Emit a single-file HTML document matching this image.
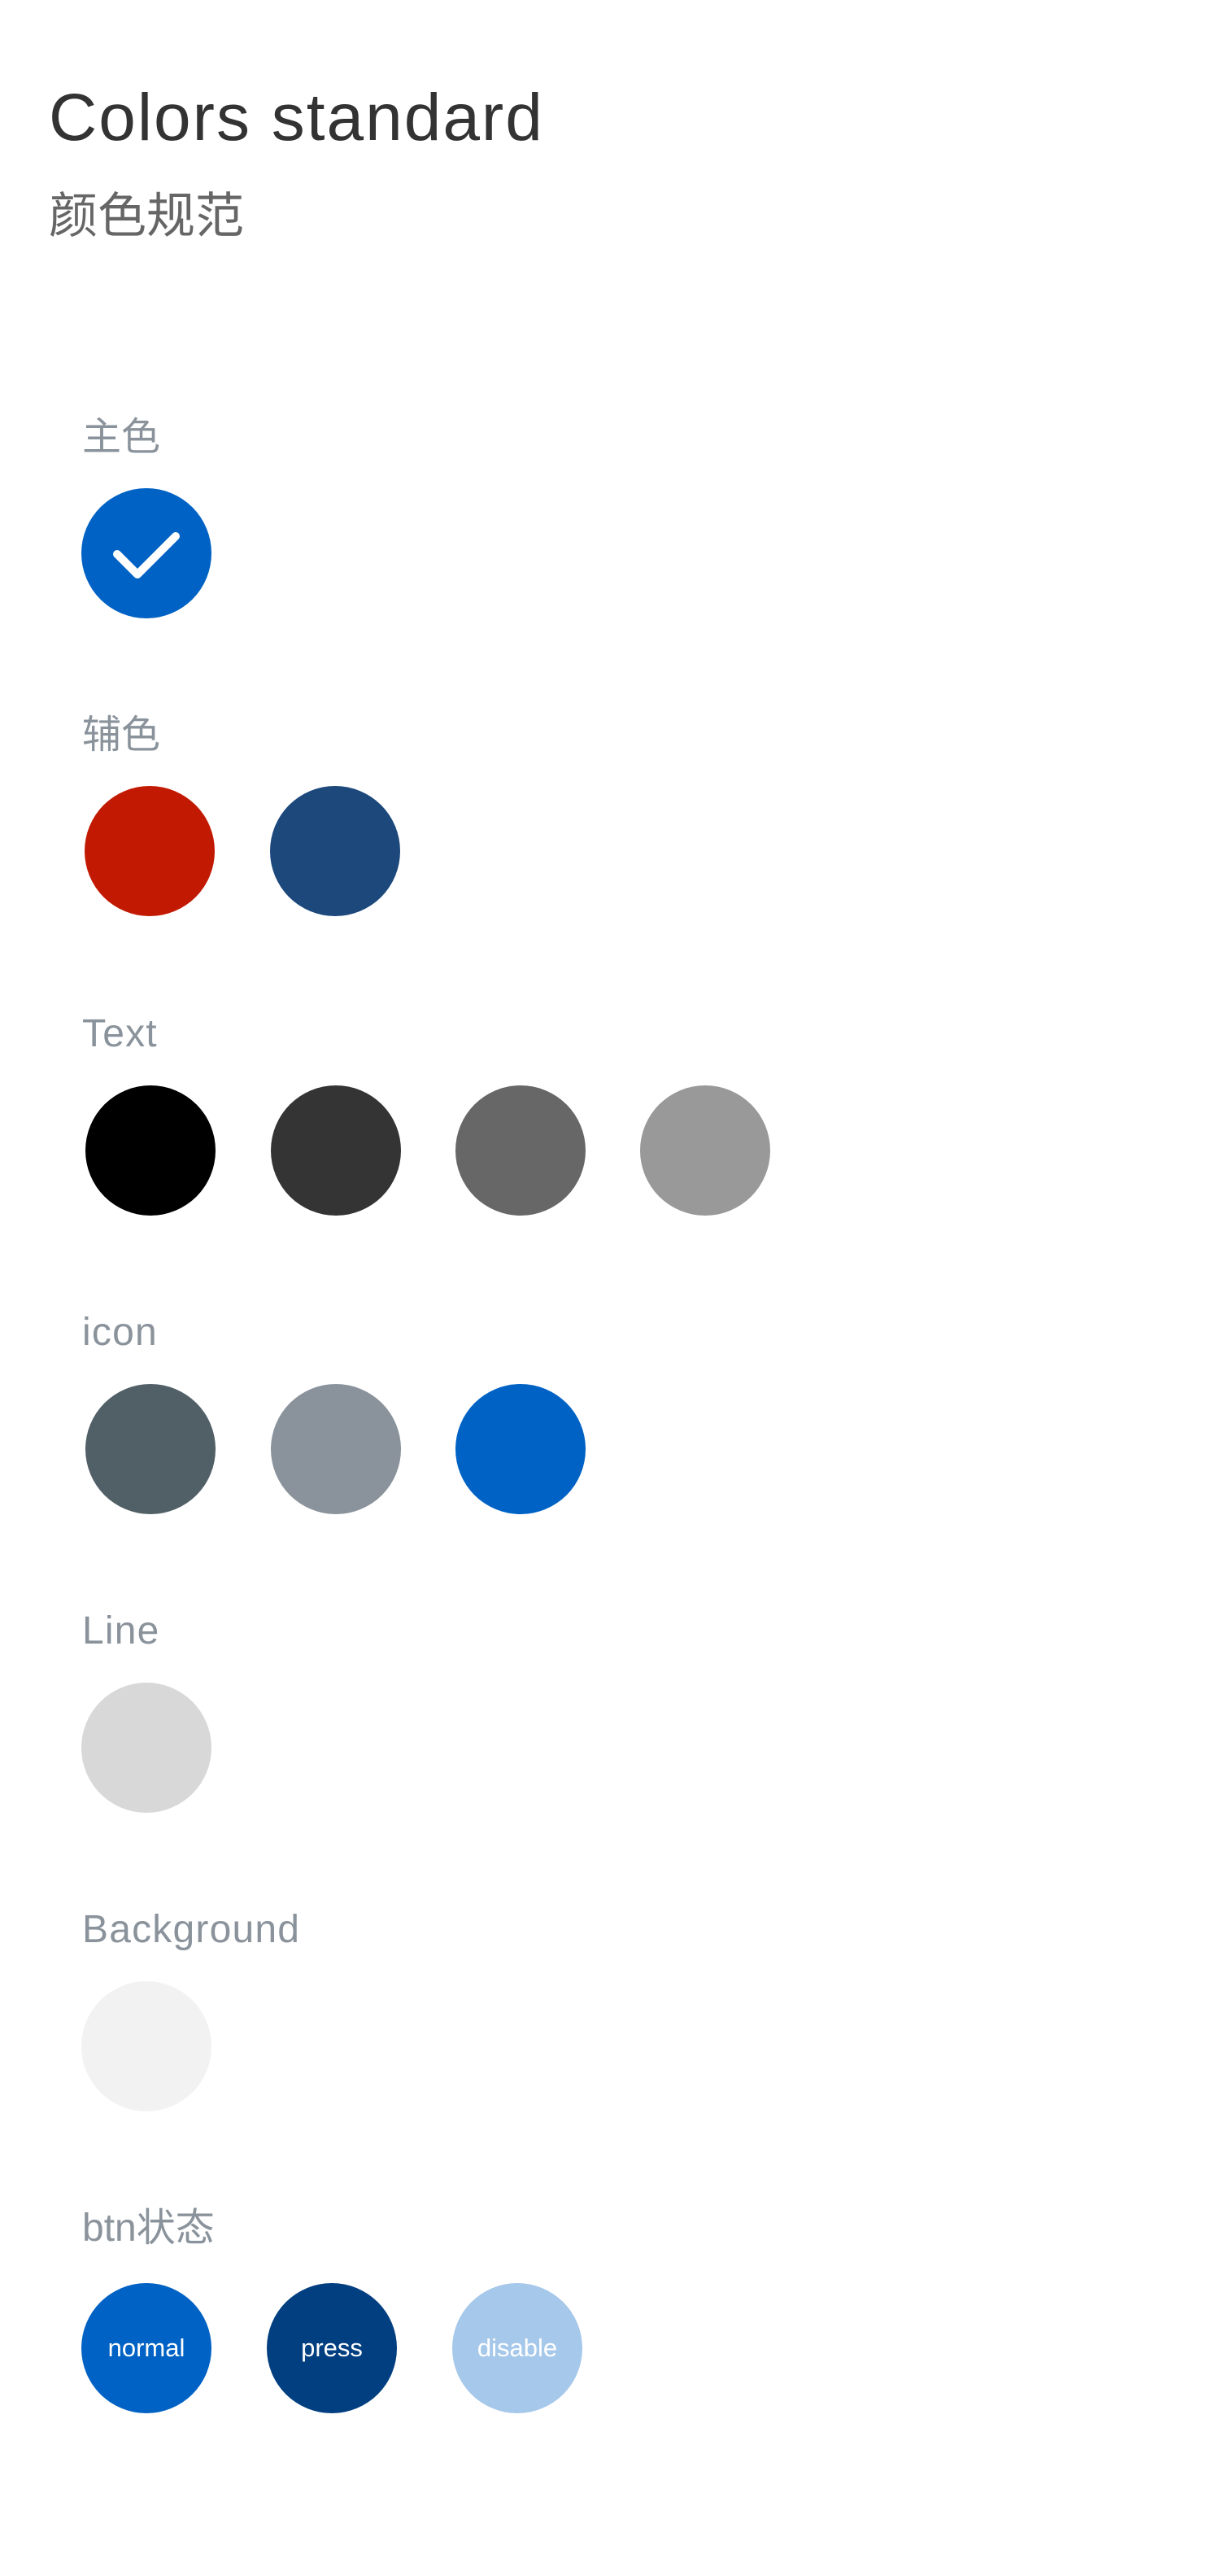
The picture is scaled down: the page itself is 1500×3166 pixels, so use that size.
<!DOCTYPE html>
<html><head><meta charset="utf-8"><style>
html,body{margin:0;padding:0;background:#fff;}
body{width:1500px;height:3166px;position:relative;overflow:hidden;font-family:"Liberation Sans","Noto Sans CJK SC",sans-serif;}
.t{position:absolute;line-height:1;white-space:nowrap;}
.c{position:absolute;width:160px;height:160px;border-radius:50%;display:flex;align-items:center;justify-content:center;color:#fff;font-size:31px;}
.l{font-size:48px;color:#8a939b;left:101px;letter-spacing:1.2px;}
.cj{letter-spacing:0;}
</style></head><body>
<div class="t" style="left:60px;top:104px;font-size:82px;color:#333;letter-spacing:2px;">Colors standard</div>
<div class="t" style="left:60px;top:236px;font-size:60px;color:#666;">颜色规范</div>

<div class="t l cj" style="top:514px;">主色</div>
<div class="c" style="left:100px;top:600px;background:#0062c4;">
<svg width="160" height="160" viewBox="0 0 160 160"><path d="M44 81 L69 106 L116 59" fill="none" stroke="#fff" stroke-width="10" stroke-linecap="round" stroke-linejoin="round"/></svg>
</div>

<div class="t l cj" style="top:880px;">辅色</div>
<div class="c" style="left:104px;top:966px;background:#c21a02;"></div>
<div class="c" style="left:332px;top:966px;background:#1c487c;"></div>

<div class="t l" style="top:1247px;">Text</div>
<div class="c" style="left:105px;top:1334px;background:#000;"></div>
<div class="c" style="left:333px;top:1334px;background:#343434;"></div>
<div class="c" style="left:560px;top:1334px;background:#676767;"></div>
<div class="c" style="left:787px;top:1334px;background:#999;"></div>

<div class="t l" style="top:1614px;">icon</div>
<div class="c" style="left:105px;top:1701px;background:#515f67;"></div>
<div class="c" style="left:333px;top:1701px;background:#8a939b;"></div>
<div class="c" style="left:560px;top:1701px;background:#0062c4;"></div>

<div class="t l" style="top:1981px;">Line</div>
<div class="c" style="left:100px;top:2068px;background:#d8d8d8;"></div>

<div class="t l" style="top:2348px;">Background</div>
<div class="c" style="left:100px;top:2435px;background:#f2f2f2;"></div>

<div class="t l cj" style="top:2715px;">btn状态</div>
<div class="c" style="left:100px;top:2806px;background:#0062c4;">normal</div>
<div class="c" style="left:328px;top:2806px;background:#023f80;">press</div>
<div class="c" style="left:556px;top:2806px;background:#a6c8ea;">disable</div>
</body></html>
